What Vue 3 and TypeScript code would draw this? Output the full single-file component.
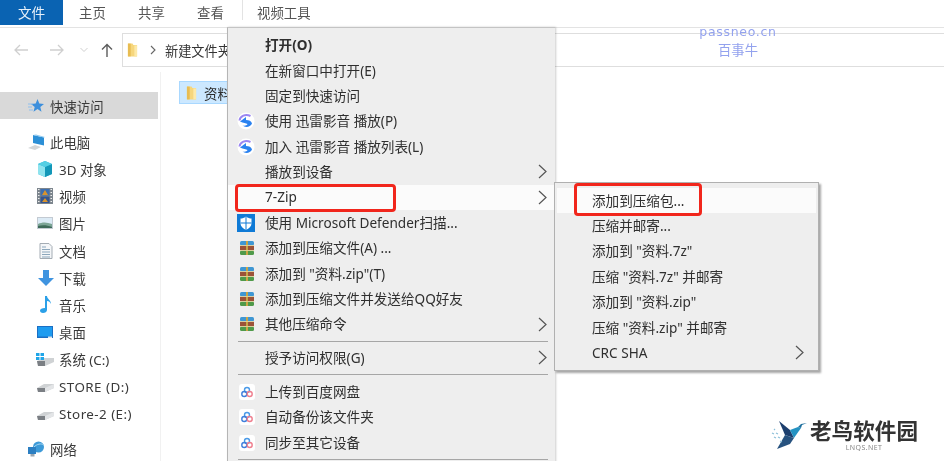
<script setup lang="ts">
interface NavItem { label: string; icon: string; level: number; active?: boolean; gap?: number; wide?: boolean }
interface MenuItem { label?: string; icon?: string; bold?: boolean; arrow?: boolean; hot?: boolean; sep?: boolean }

const tabs = ['主页', '共享', '查看']

const nav: NavItem[] = [
  { label: '快速访问', icon: 'star', level: 0, active: true },
  { label: '此电脑', icon: 'pc', level: 0, gap: 10 },
  { label: '3D 对象', icon: 'cube', level: 1 },
  { label: '视频', icon: 'film', level: 1 },
  { label: '图片', icon: 'pic', level: 1 },
  { label: '文档', icon: 'doc', level: 1 },
  { label: '下载', icon: 'down', level: 1 },
  { label: '音乐', icon: 'note', level: 1 },
  { label: '桌面', icon: 'desk', level: 1 },
  { label: '系统 (C:)', icon: 'sys', level: 1 },
  { label: 'STORE (D:)', icon: 'drive', level: 1, wide: true },
  { label: 'Store-2 (E:)', icon: 'drive', level: 1, wide: true },
  { label: '网络', icon: 'net', level: 0, gap: 8 },
]

const menu: MenuItem[] = [
  { label: '打开(O)', bold: true },
  { label: '在新窗口中打开(E)' },
  { label: '固定到快速访问' },
  { label: '使用 迅雷影音 播放(P)', icon: 'xl' },
  { label: '加入 迅雷影音 播放列表(L)', icon: 'xl' },
  { label: '播放到设备', arrow: true },
  { label: '7-Zip', arrow: true, hot: true },
  { label: '使用 Microsoft Defender扫描...', icon: 'def' },
  { label: '添加到压缩文件(A) ...', icon: 'rar' },
  { label: '添加到 "资料.zip"(T)', icon: 'rar' },
  { label: '添加到压缩文件并发送给QQ好友', icon: 'rar' },
  { label: '其他压缩命令', icon: 'rar', arrow: true },
  { sep: true },
  { label: '授予访问权限(G)', arrow: true },
  { sep: true },
  { label: '上传到百度网盘', icon: 'bd' },
  { label: '自动备份该文件夹', icon: 'bd' },
  { label: '同步至其它设备', icon: 'bd' },
  { sep: true },
]

const sub: MenuItem[] = [
  { label: '添加到压缩包...', hot: true },
  { label: '压缩并邮寄...' },
  { label: '添加到 "资料.7z"' },
  { label: '压缩 "资料.7z" 并邮寄' },
  { label: '添加到 "资料.zip"' },
  { label: '压缩 "资料.zip" 并邮寄' },
  { label: 'CRC SHA', arrow: true },
]
</script>

<template>
  <div class="page">
    <svg class="defs" aria-hidden="true">
      <symbol id="i-folder" viewBox="0 0 12 16">
        <path d="M1 1h5l1 1.500h4V15H1z" fill="#f6d67c" />
        <path d="M1 1h3v14H1z" fill="#e8bc52" />
        <path d="M8 3h3v12H8z" fill="#fde9a8" />
      </symbol>
      <symbol id="i-star" viewBox="0 0 16 16">
        <path d="M9.500 1l1.800 4.600 4.700.3-3.700 3 1.200 4.800-4-2.700-4 2.700 1.200-4.800-3.700-3 4.700-.3z" fill="#3d8fdc" />
        <path d="M0 6h5M0 9h4M1 12h4" stroke="#8fc0ee" stroke-width="1.200" />
      </symbol>
      <symbol id="i-pc" viewBox="0 0 18 16">
        <path d="M5 1l11 2.500v8L5 9z" fill="#2c8fd6" />
        <path d="M5 1l3-.5 9 2.500-1 .5z" fill="#8ec9ef" />
        <path d="M0 14l7-3 6 2-6 3z" fill="#d3d6d8" />
      </symbol>
      <symbol id="i-cube" viewBox="0 0 16 16">
        <path d="M8 0l7 3v10l-7 3-7-3V3z" fill="#29b4d8" />
        <path d="M1 3l7 3v10l-7-3z" fill="#8fe3ee" />
        <path d="M8 6l7-3v10l-7 3z" fill="#1397b8" />
        <path d="M8 0l7 3-7 3-7-3z" fill="#55cfe3" />
      </symbol>
      <symbol id="i-film" viewBox="0 0 16 16">
        <rect width="16" height="16" fill="#7d868e" />
        <rect x="3.500" y="1" width="9" height="6.500" fill="#3d6fb0" />
        <rect x="3.500" y="8.500" width="9" height="6.500" fill="#34558f" />
        <path d="M5 7l3-5 3 5zM5 14l3-4 3 4z" fill="#d9932c" />
        <path d="M1 1.500h1.500M1 4.500h1.500M1 7.500h1.500M1 10.500h1.500M1 13.500h1.500M13.500 1.500H15M13.500 4.500H15M13.500 7.500H15M13.500 10.500H15M13.500 13.500H15" stroke="#eeeeee" />
      </symbol>
      <symbol id="i-pic" viewBox="0 0 16 14">
        <rect y="1" width="16" height="12" fill="#c3cad2" />
        <rect x="1" y="2" width="14" height="10" fill="#dcebf6" />
        <path d="M1 8c4-2 9-2 14 0v4H1z" fill="#7ca596" />
        <path d="M1 10c4-1 9-1 14 1v1H1z" fill="#3d6a59" />
      </symbol>
      <symbol id="i-doc" viewBox="0 0 14 16">
        <path d="M1 .5h9l3 3v12H1z" fill="#f4f6f8" stroke="#a4acb4" />
        <path d="M3 4h4M3 6.500h8M3 9h8M3 11.500h8M3 14h8" stroke="#8ca7bc" />
      </symbol>
      <symbol id="i-down" viewBox="0 0 16 16">
        <path d="M5 0h6v8h5l-8 8-8-8h5z" fill="#3f94e0" />
      </symbol>
      <symbol id="i-note" viewBox="0 0 12 17">
        <path d="M5 0h2c0 3 4 4 4 8-1-2-2-3-4-3v9c0 2-2 3-4 3s-3-1-3-2.500S2 12 5 12z" fill="#2ba0e8" />
      </symbol>
      <symbol id="i-desk" viewBox="0 0 16 12">
        <rect width="16" height="12" fill="#1b6fc4" />
        <rect x="1" y="1" width="14" height="9.500" fill="#1e9cf0" />
        <rect x="11" y="10.500" width="4" height="1.500" fill="#dfe7ee" />
      </symbol>
      <symbol id="i-drive" viewBox="0 0 17 10">
        <path d="M0 5l7-4h10v4l-9 4H1z" fill="#cfd2d4" />
        <path d="M0 5h8v4H1z" fill="#7b7f84" />
        <path d="M8 5l9-4v4l-9 4z" fill="#e3e5e7" />
      </symbol>
      <symbol id="i-sys" viewBox="0 0 18 14">
        <path d="M1 9l7-3h10v4l-9 4H2z" fill="#cfd2d4" />
        <path d="M1 9h8v5H2z" fill="#7b7f84" />
        <path d="M0 1h3.500v3H0zM4.500 1H8v3H4.500zM0 5h3.500v3H0zM4.500 5H8v3H4.500z" fill="#1fa5e8" />
      </symbol>
      <symbol id="i-net" viewBox="0 0 16 16">
        <circle cx="10.500" cy="6" r="5.500" fill="#3d9ad8" />
        <path d="M6 6c3-3 7-4 10-2" stroke="#a8d8f3" fill="none" />
        <rect y="6" width="8" height="7" fill="#2c7fc2" />
        <rect x="2.500" y="13" width="4" height="2.500" fill="#9aa6b0" />
      </symbol>
      <symbol id="i-xl" viewBox="0 0 18 18">
        <circle cx="9" cy="9" r="8.500" fill="#fff" />
        <path d="M2.500 8.500C3 4 8.500 1.500 13.500 4" fill="none" stroke="#9a86f2" stroke-width="2" />
        <path d="M3 9.500L9 5v3c3 0 5.500 1 6 3.500-1.500 3.500-6.500 4.500-9.500 2 2.500.5 4.500 0 5-1.500C9 11 6.500 11 3 9.500z" fill="#2a82f0" />
      </symbol>
      <symbol id="i-def" viewBox="0 0 18 18">
        <rect width="18" height="18" fill="#0f7ad6" />
        <path d="M9 2.500c2 1.500 3.500 2 5.500 2v5c0 3-2.500 5-5.500 6.500-3-1.500-5.500-3.500-5.500-6.500v-5c2 0 3.500-.5 5.500-2z" fill="#fff" />
        <path d="M8.500 2.500h1v13.500h-1zM3.500 8.500h11v1h-11z" fill="#0f7ad6" />
      </symbol>
      <symbol id="i-rar" viewBox="0 0 16 16">
        <rect x="1" y="1" width="14" height="4.600" rx="1.500" fill="#3f97d3" />
        <rect x="1" y="5.700" width="14" height="4.600" fill="#9c5238" />
        <rect x="1" y="10.400" width="14" height="4.600" rx="1.500" fill="#4f9a4a" />
        <rect x="7" y="1" width="2" height="14" fill="#c9a545" />
        <rect x="1" y="5.100" width="14" height=".8" fill="#e7d9a0" />
        <rect x="1" y="10.100" width="14" height=".8" fill="#e7d9a0" />
      </symbol>
      <symbol id="i-bd" viewBox="0 0 16 16">
        <rect width="16" height="16" rx="3" fill="#fff" />
        <circle cx="8" cy="6" r="2.500" fill="none" stroke="#4a9ae8" stroke-width="1.400" />
        <circle cx="5.300" cy="10" r="2.500" fill="none" stroke="#3e7fdc" stroke-width="1.400" />
        <circle cx="10.700" cy="10" r="2.500" fill="none" stroke="#ef7f8e" stroke-width="1.400" />
      </symbol>
    </svg>

    <header class="ribbon">
      <div class="file-tab">文件</div>
      <div v-for="t in tabs" :key="t" class="tab">{{ t }}</div>
      <div class="tab tab-tool">视频工具</div>
    </header>

    <div class="toolbar">
      <svg class="nav-btn" width="16" height="12" viewBox="0 0 16 12"><path d="M15 6H2M7 1L2 6l5 5" fill="none" stroke="#cfcfcf" stroke-width="1.300" /></svg>
      <svg class="nav-btn" width="16" height="12" viewBox="0 0 16 12"><path d="M1 6h13M9 1l5 5-5 5" fill="none" stroke="#cfcfcf" stroke-width="1.300" /></svg>
      <svg class="nav-btn" width="8" height="6" viewBox="0 0 8 6"><path d="M.5 1L4 4.500 7.500 1" fill="none" stroke="#cfcfcf" /></svg>
      <svg class="nav-btn up" width="12" height="14" viewBox="0 0 12 14"><path d="M6 14V1.500M1 6.500l5-5 5 5" fill="none" stroke="#5c5c5c" stroke-width="1.400" /></svg>
      <div class="address">
        <svg class="addr-folder"><use href="#i-folder" /></svg>
        <svg width="6" height="10" viewBox="0 0 6 10"><path d="M1 1l4 4-4 4" fill="none" stroke="#666" stroke-width="1.100" /></svg>
        <span class="crumb">新建文件夹</span>
      </div>
    </div>

    <div class="body">
      <aside class="sidebar">
        <div
          v-for="n in nav"
          :key="n.label"
          class="nav-row"
          :class="[{ active: n.active, wide: n.wide }, 'lv' + n.level, n.gap === 10 ? 'gap-a' : '', n.gap === 8 ? 'gap-b' : '']"
        >
          <span class="nav-ico"><svg :class="'ni-' + n.icon"><use :href="'#i-' + n.icon" /></svg></span>
          <span>{{ n.label }}</span>
        </div>
      </aside>
      <main class="files">
        <div class="tile">
          <svg class="tile-folder"><use href="#i-folder" /></svg>
          <span>资料</span>
        </div>
      </main>
    </div>

    <div class="menu">
      <template v-for="(m, i) in menu" :key="i">
        <div v-if="m.sep" class="sep"></div>
        <div v-else class="row" :class="{ hot: m.hot, bold: m.bold }">
          <span class="row-ico"><svg v-if="m.icon" :class="'mi-' + m.icon"><use :href="'#i-' + m.icon" /></svg></span>
          <span class="row-label">{{ m.label }}</span>
          <svg v-if="m.arrow" class="chev" width="9" height="15" viewBox="0 0 9 15"><path d="M1 1l7 6.500L1 14" fill="none" stroke="#555" stroke-width="1.200" /></svg>
        </div>
      </template>
    </div>

    <div class="submenu">
      <div v-for="s in sub" :key="s.label" class="row sub-row" :class="{ hot: s.hot }">
        <span class="row-label">{{ s.label }}</span>
        <svg v-if="s.arrow" class="chev" width="9" height="15" viewBox="0 0 9 15"><path d="M1 1l7 6.500L1 14" fill="none" stroke="#555" stroke-width="1.200" /></svg>
      </div>
    </div>

    <div class="mark mark-a"></div>
    <div class="mark mark-b"></div>

    <div class="watermark">
      <div class="wm-en">passneo.cn</div>
      <div class="wm-cn">百事牛</div>
    </div>

    <div class="logo">
      <svg class="bird" width="38" height="30" viewBox="0 0 38 30">
        <path d="M9 1l11 9 4 8-9-3z" fill="#1d3f6e" />
        <path d="M15 15l9 3-4 6-13 5z" fill="#27527f" />
        <path d="M20 10l8-3 3 1-7 10z" fill="#2492c2" />
        <path d="M28 7l3-3 6-1-5 2-1 3z" fill="#1d6f9e" />
        <path d="M4 9l1 1M2 13l2 1M6 13l2 1M4 17l2 1M8 17l2 1M10 21l2 1" stroke="#8dbfd8" stroke-width="1.200" />
      </svg>
      <div class="logo-text">
        <div class="logo-cn">老鸟软件园</div>
        <div class="logo-en">LNQS.NET</div>
      </div>
    </div>
  </div>
</template>

<style>
html, body { margin: 0; background: #fff; overflow: hidden; }
</style>

<style scoped>
.page {
  position: relative;
  width: 944px;
  height: 461px;
  overflow: hidden;
  background: #fff;
  color: #2c2c2c;
  font-family: "Noto Sans", "Noto Sans CJK SC", sans-serif;
  font-size: 13.4px;
  filter: blur(0.4px);
}
.defs { position: absolute; width: 0; height: 0; }

.ribbon {
  display: flex;
  height: 27px;
  border-bottom: 1px solid #e3e3e3;
  box-sizing: content-box;
}
.file-tab {
  width: 63px;
  height: 25px;
  line-height: 26px;
  background: #0a63b2;
  color: #e8f1fa;
  text-align: center;
  font-size: 13.6px;
}
.tab {
  width: 59px;
  line-height: 26px;
  text-align: center;
  color: #555;
  font-size: 13.4px;
}
.tab-tool {
  width: auto;
  margin-left: 2px;
  padding: 0 15px 0 14px;
  height: 20px;
  border-left: 1px solid #e3e3e3;
}

.toolbar {
  display: flex;
  align-items: center;
  height: 44px;
  padding-left: 13px;
}
.nav-btn { margin-right: 20px; }
.nav-btn:nth-child(2) { margin-right: 15px; }
.nav-btn:nth-child(3) { margin-right: 13px; }
.nav-btn.up { margin-right: 9px; }
.address {
  flex: 1;
  display: flex;
  align-items: center;
  height: 34px;
  box-sizing: border-box;
  border: 1px solid #dedede;
  border-right: none;
  padding-left: 4px;
}
.addr-folder { width: 11px; height: 16px; margin-right: 12px; }
.crumb { margin-left: 9px; color: #333; font-size: 13.2px; }

.body { display: flex; height: 389px; }
.sidebar {
  width: 160px;
  height: 100%;
  border-right: 1px solid #f1f1f1;
  padding-top: 20px;
  box-sizing: content-box;
  color: #3a3a3a;
}
.nav-row {
  display: flex;
  align-items: center;
  height: 27.2px;
  width: 158px;
  box-sizing: border-box;
}
.nav-row.active { background: #d9d9d9; }
.nav-row.wide { letter-spacing: 0.45px; padding-top: 1px; }
.gap-a { margin-top: 9px; }
.gap-b { margin-top: 8px; }
.lv0 { padding-left: 28px; }
.lv1 { padding-left: 37px; }
.nav-ico { display: flex; align-items: center; width: 22px; flex: none; }
.nav-ico svg { width: 16px; height: 16px; }
.ni-pc { width: 18px !important; }
.ni-pic { height: 14px !important; }
.ni-doc { width: 14px !important; margin-left: 2px; }
.ni-note { width: 12px !important; height: 17px !important; margin-left: 3px; }
.ni-down { margin-left: 1px; }
.ni-desk { height: 12px !important; }
.ni-drive { width: 17px !important; height: 10px !important; margin-top: 3px; }
.ni-sys { width: 18px !important; height: 14px !important; margin-left: -1px; }

.files { flex: 1; padding: 9px 0 0 18px; }
.tile {
  display: flex;
  align-items: center;
  width: 60px;
  height: 23px;
  box-sizing: border-box;
  border: 1px solid #a9d8ff;
  background: #cce8ff;
  padding-left: 6px;
}
.tile-folder { width: 11px; height: 16px; margin-right: 7px; }

.menu {
  position: absolute;
  left: 227px;
  top: 27px;
  width: 328px;
  height: 440px;
  box-sizing: border-box;
  background: #eeeeee;
  border-left: 1px solid #b5b5b5;
  border-top: 1px solid #c4c4c4;
  padding-top: 4.5px;
  box-shadow: 1px 0 2px rgba(0,0,0,.2);
  color: #2f2f2f;
  font-size: 13.6px;
}
.row {
  display: flex;
  align-items: center;
  height: 25.4px;
  position: relative;
}
.row.bold { font-weight: 700; }
.row.hot { background: #fbfbfb; }
.row-ico {
  display: flex;
  align-items: center;
  justify-content: center;
  width: 37px;
  flex: none;
}
.row-ico svg { width: 16px; height: 16px; }
.mi-xl { width: 18px !important; height: 18px !important; margin-left: -1px; }
.mi-def { width: 18px !important; height: 18px !important; margin-left: -1px; }
.row-label { white-space: pre; padding-bottom: 2px; }
.chev { position: absolute; right: 8px; top: 5px; }
.sep {
  height: 1px;
  background: #a6a6a6;
  margin: 3.5px 7px 3.75px 10px;
}

.submenu {
  position: absolute;
  left: 554px;
  top: 182px;
  width: 265px;
  height: 189px;
  box-sizing: border-box;
  background: #eeeeee;
  border: 1px solid #b0b0b0;
  padding: 5px 2px 0;
  box-shadow: 2px 2px 2px rgba(0,0,0,.35);
  color: #2f2f2f;
  font-size: 13.6px;
}
.sub-row { padding-left: 35px; }
.sub-row .chev { right: 12px; }

.mark {
  position: absolute;
  box-sizing: border-box;
  border: 3px solid #f1261c;
  border-radius: 4px;
}
.mark-a { left: 235px; top: 184px; width: 161px; height: 28px; }
.mark-b { left: 574px; top: 183px; width: 128px; height: 33px; }

.watermark {
  position: absolute;
  left: 688px;
  top: 23px;
  width: 100px;
  text-align: center;
  color: #93a2ee;
  line-height: 18px;
}
.wm-en { letter-spacing: 0.7px; font-family: "DejaVu Sans", sans-serif; font-size: 12.5px; }
.wm-cn { font-size: 13.3px; }

.logo {
  position: absolute;
  left: 770px;
  top: 419px;
  display: flex;
  background: #fff;
}
.bird { flex: none; margin-top: 1px; }
.logo-text { margin-left: 2px; }
.logo-cn {
  font-size: 21.6px;
  line-height: 24px;
  font-weight: 700;
  color: #333;
  white-space: nowrap;
}
.logo-en {
  font-size: 7px;
  line-height: 9px;
  text-align: center;
  color: #888;
  letter-spacing: .4px;
}
</style>
